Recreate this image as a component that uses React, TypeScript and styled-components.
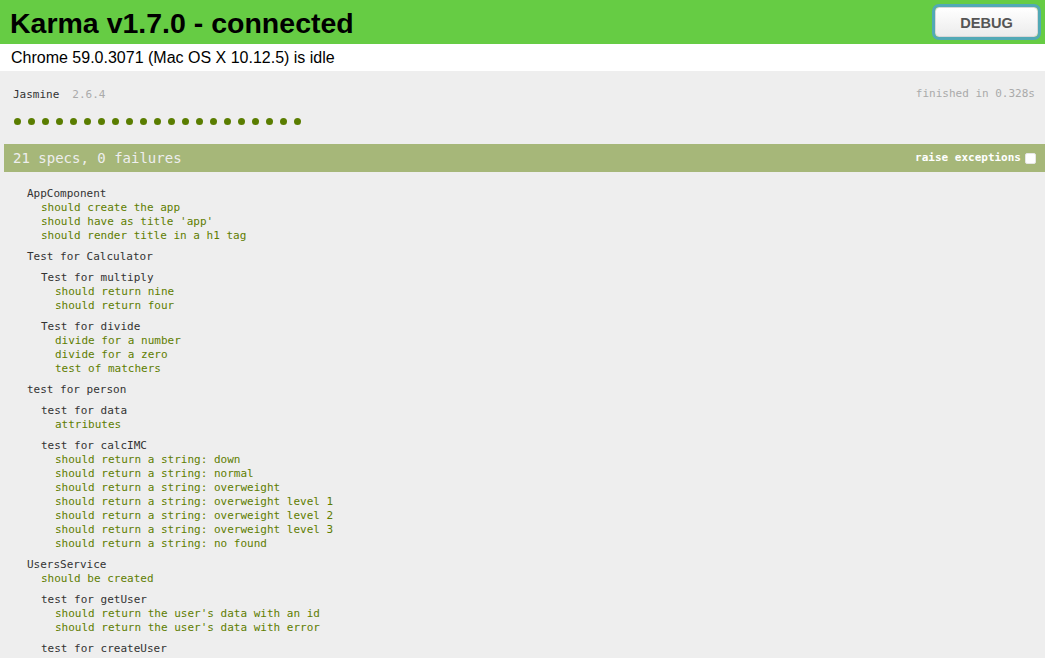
import React from "react";
import styled, { createGlobalStyle } from "styled-components";

const Global = createGlobalStyle`
  html, body { margin: 0; padding: 0; height: 100%; overflow: hidden; }
  body { background: #eee; font-family: "Liberation Sans", Arial, Helvetica, sans-serif; }
  ul { margin: 0; padding: 0; list-style: none; }
`;

const Page = styled.div`
  display: flex;
  flex-direction: column;
  width: 1045px;
  height: 658px;
  overflow: hidden;
`;

const Banner = styled.div`
  flex-shrink: 0;
  display: flex;
  align-items: center;
  justify-content: space-between;
  height: 44px;
  background: #66cc44;
  padding: 0 7px 0 10px;
  box-sizing: border-box;
`;

const Title = styled.h1`
  margin: 0;
  padding-top: 2px;
  font-size: 28.5px;
  line-height: 42px;
  font-weight: bold;
  color: #000;
  font-family: "Liberation Sans", Arial, sans-serif;
`;

const DebugButton = styled.button`
  width: 103px;
  height: 30px;
  border: 1px solid #d8d8d8;
  border-radius: 4px;
  background: linear-gradient(#ffffff, #ececec);
  box-shadow: 0 0 0 3px #52a9b6;
  color: #555;
  font-family: "Liberation Sans", Arial, sans-serif;
  font-weight: bold;
  font-size: 14.6px;
  padding: 0;
  padding-top: 1px;
  cursor: pointer;
`;

const Browser = styled.div`
  flex-shrink: 0;
  background: #fff;
  height: 27px;
  box-sizing: border-box;
  padding: 2px 11px 0;
  font-size: 16px;
  line-height: 23px;
  color: #000;
`;

const Reporter = styled.div`
  flex: 1;
  min-height: 0;
  overflow: hidden;
  background: #eee;
  padding: 0 0 0 4px;
  font-family: "DejaVu Sans Mono", Monaco, monospace;
  font-size: 11px;
  line-height: 14px;
  color: #333;
`;

const JasmineBanner = styled.div`
  display: flex;
  justify-content: space-between;
  align-items: flex-start;
  padding: 16px 10px 0 9px;
`;

const Brand = styled.div`
  display: flex;
  gap: 13px;
  padding-top: 1px;
`;

const Version = styled.span`
  color: #aaa;
`;

const Duration = styled.span`
  color: #aaa;
`;

const Dots = styled.ul`
  display: flex;
  gap: 7px;
  padding-left: 10px;
  margin-top: 16px;
  height: 7px;
`;

const Dot = styled.li`
  width: 7px;
  height: 7px;
  border-radius: 50%;
  background: #5a7d00;
`;

const Bar = styled.div`
  margin-top: 19px;
  height: 28px;
  display: flex;
  align-items: center;
  justify-content: space-between;
  background: #a6b779;
  color: #eee;
  padding: 0 9px 0 9px;
  font-size: 14px;
  line-height: 28px;
`;

const Raise = styled.label`
  display: flex;
  align-items: center;
  gap: 4px;
  font-size: 11px;
  font-weight: bold;
  color: #fff;
`;

const Check = styled.span`
  width: 11px;
  height: 11px;
  border-radius: 2px;
  background: #fff;
  box-sizing: border-box;
  border: 1px solid #e6e6e6;
`;

const Summary = styled.div`
  margin-top: 15px;
  padding-left: 9px;
`;

const SuiteList = styled.ul`
  margin: 7px 0;
  padding-left: 14px;
`;

const SuiteTitle = styled.li`
  color: #333;
`;

const SpecList = styled.ul`
  padding-left: 14px;
`;

const Spec = styled.li`
  color: #5e7d00;
`;

type SuiteData = { title: string; specs?: string[]; children?: SuiteData[] };

const data: SuiteData[] = [
  {
    title: "AppComponent",
    specs: ["should create the app", "should have as title 'app'", "should render title in a h1 tag"],
  },
  {
    title: "Test for Calculator",
    children: [
      { title: "Test for multiply", specs: ["should return nine", "should return four"] },
      { title: "Test for divide", specs: ["divide for a number", "divide for a zero", "test of matchers"] },
    ],
  },
  {
    title: "test for person",
    children: [
      { title: "test for data", specs: ["attributes"] },
      {
        title: "test for calcIMC",
        specs: [
          "should return a string: down",
          "should return a string: normal",
          "should return a string: overweight",
          "should return a string: overweight level 1",
          "should return a string: overweight level 2",
          "should return a string: overweight level 3",
          "should return a string: no found",
        ],
      },
    ],
  },
  {
    title: "UsersService",
    specs: ["should be created"],
    children: [
      {
        title: "test for getUser",
        specs: ["should return the user's data with an id", "should return the user's data with error"],
      },
      { title: "test for createUser", specs: ["should return the user's data"] },
    ],
  },
];

const Suite: React.FC<{ s: SuiteData }> = ({ s }) => (
  <SuiteList>
    <SuiteTitle>{s.title}</SuiteTitle>
    {s.specs && (
      <SpecList>
        {s.specs.map((sp) => (
          <Spec key={sp}>{sp}</Spec>
        ))}
      </SpecList>
    )}
    {s.children?.map((c) => (
      <Suite key={c.title} s={c} />
    ))}
  </SuiteList>
);

export default function App() {
  return (
    <Page>
      <Global />
      <Banner>
        <Title>Karma v1.7.0 - connected</Title>
        <DebugButton>DEBUG</DebugButton>
      </Banner>
      <Browser>Chrome 59.0.3071 (Mac OS X 10.12.5) is idle</Browser>
      <Reporter>
        <JasmineBanner>
          <Brand>
            <span>Jasmine</span>
            <Version>2.6.4</Version>
          </Brand>
          <Duration>finished in 0.328s</Duration>
        </JasmineBanner>
        <Dots>
          {Array.from({ length: 21 }).map((_, i) => (
            <Dot key={i} />
          ))}
        </Dots>
        <Bar>
          <span>21 specs, 0 failures</span>
          <Raise>
            raise exceptions
            <Check />
          </Raise>
        </Bar>
        <Summary>
          {data.map((s) => (
            <Suite key={s.title} s={s} />
          ))}
        </Summary>
      </Reporter>
    </Page>
  );
}
